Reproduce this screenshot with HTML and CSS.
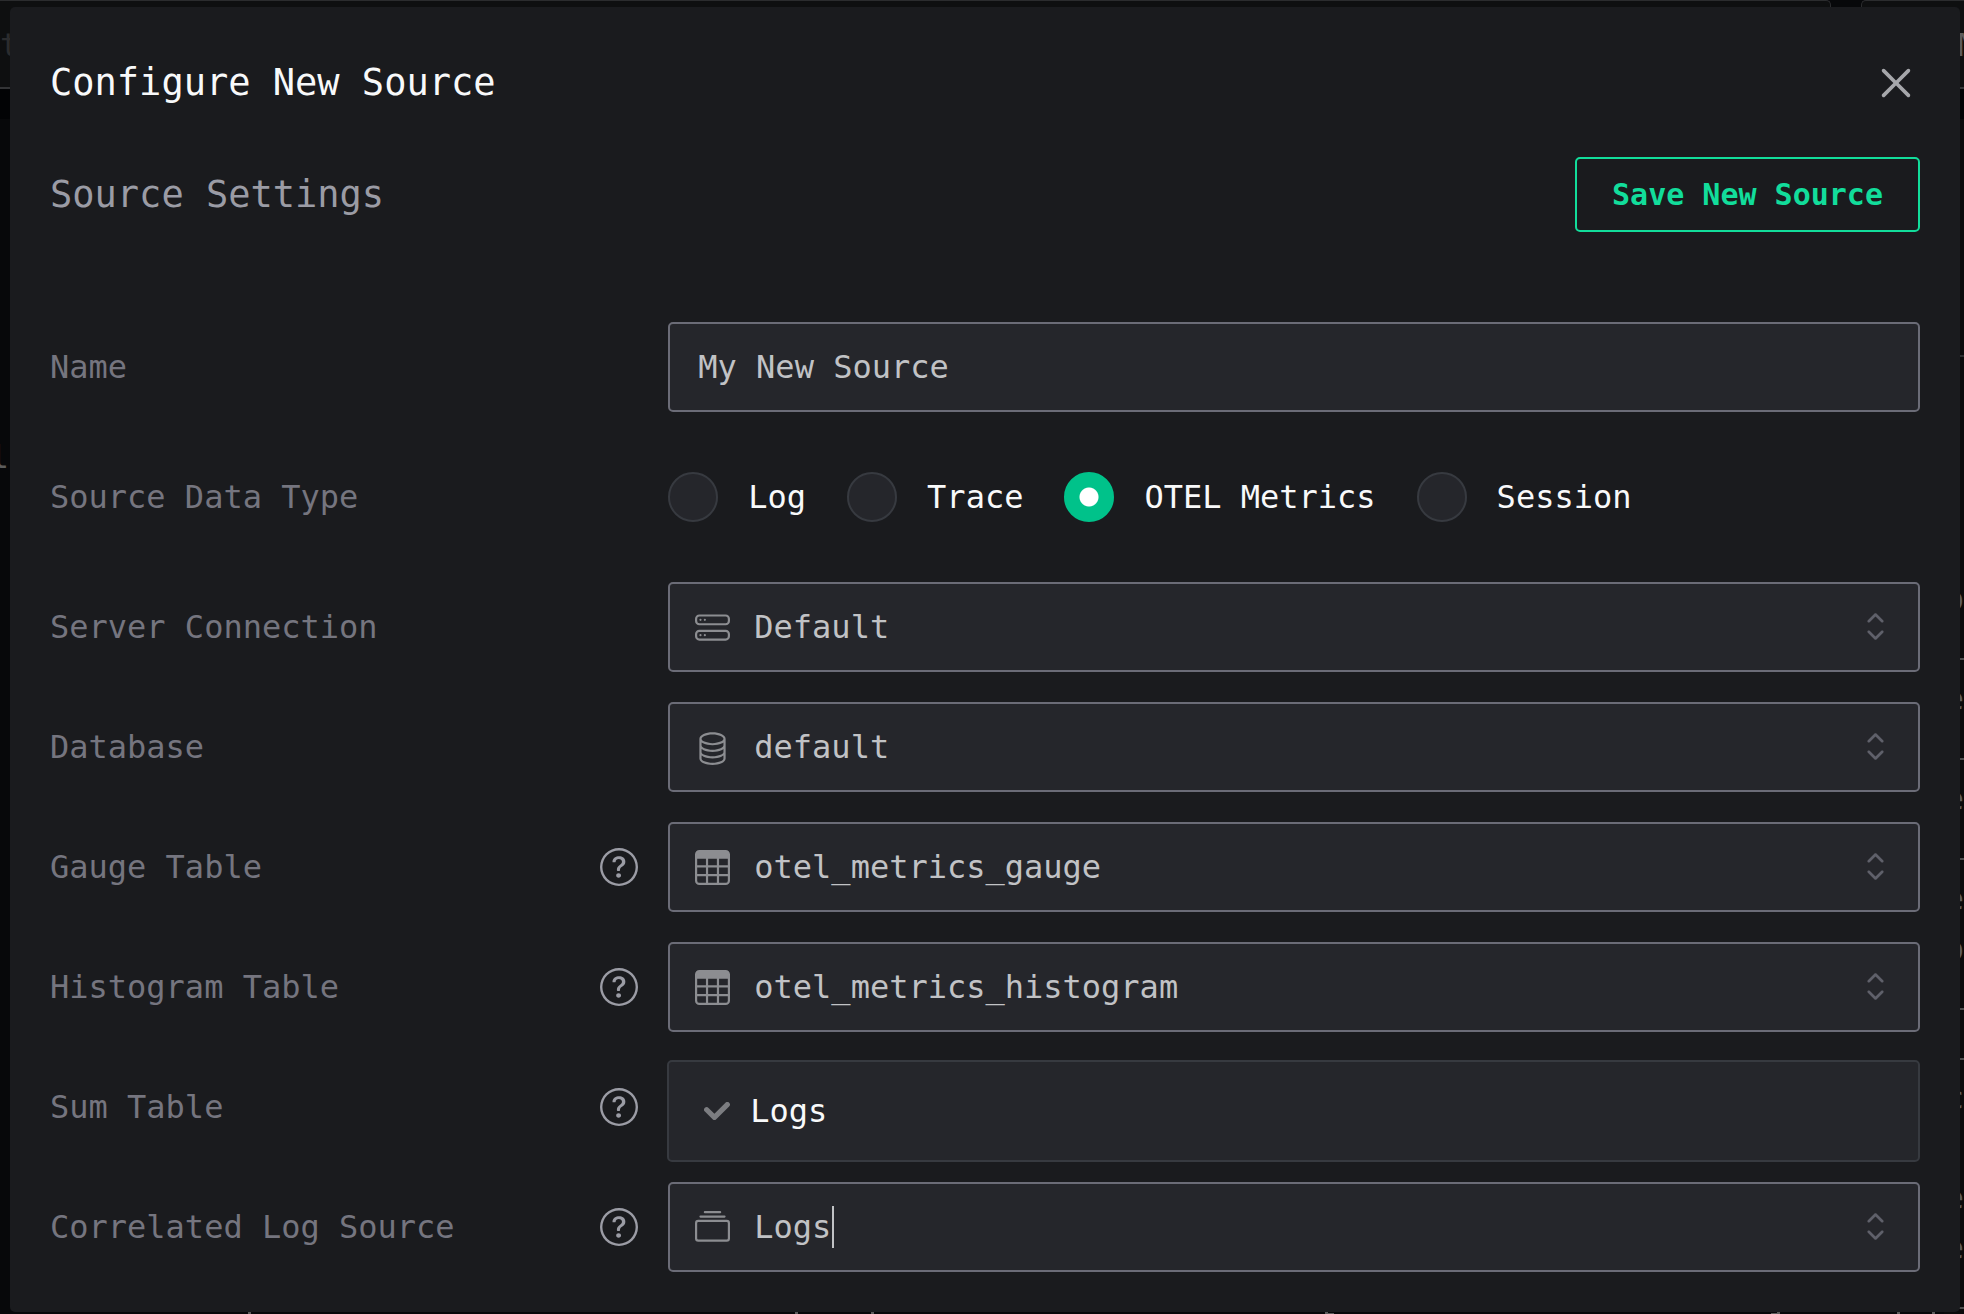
FILE: index.html
```html
<!DOCTYPE html>
<html lang="en">
<head>
<meta charset="utf-8">
<meta name="viewport" content="width=device-width, initial-scale=1">
<title>Configure New Source</title>
<link rel="stylesheet" href="styles.css">
</head>
<body>
<svg class="sprite" aria-hidden="true">
  <symbol id="i-close" viewBox="0 0 15 15"><path d="M11.7816 4.03157C12.0062 3.80702 12.0062 3.44295 11.7816 3.2184C11.5571 2.99385 11.193 2.99385 10.9685 3.2184L7.50005 6.68682L4.03164 3.2184C3.80708 2.99385 3.44301 2.99385 3.21846 3.2184C2.99391 3.44295 2.99391 3.80702 3.21846 4.03157L6.68688 7.49999L3.21846 10.9684C2.99391 11.193 2.99391 11.557 3.21846 11.7816C3.44301 12.0061 3.80708 12.0061 4.03164 11.7816L7.50005 8.31316L10.9685 11.7816C11.193 12.0061 11.5571 12.0061 11.7816 11.7816C12.0062 11.557 12.0062 11.193 11.7816 10.9684L8.31322 7.49999L11.7816 4.03157Z"/></symbol>
  <symbol id="i-updown" viewBox="0 0 15 15"><path d="M4.93179 5.43179C4.75605 5.60753 4.75605 5.89245 4.93179 6.06819C5.10753 6.24392 5.39245 6.24392 5.56819 6.06819L7.49999 4.13638L9.43179 6.06819C9.60753 6.24392 9.89245 6.24392 10.0682 6.06819C10.2439 5.89245 10.2439 5.60753 10.0682 5.43179L7.81819 3.18179C7.73379 3.0974 7.61933 3.04999 7.49999 3.04999C7.38064 3.04999 7.26618 3.0974 7.18179 3.18179L4.93179 5.43179ZM10.0682 9.56819C10.2439 9.39245 10.2439 9.10753 10.0682 8.93179C9.89245 8.75606 9.60753 8.75606 9.43179 8.93179L7.49999 10.8636L5.56819 8.93179C5.39245 8.75606 5.10753 8.75606 4.93179 8.93179C4.75605 9.10753 4.75605 9.39245 4.93179 9.56819L7.18179 11.8182C7.35753 11.9939 7.64245 11.9939 7.81819 11.8182L10.0682 9.56819Z"/></symbol>
  <symbol id="i-check" viewBox="0 0 10 7"><path d="M4 4.586L1.707 2.293A1 1 0 1 0 .293 3.707l3 3a.997.997 0 0 0 1.414 0l5-5A1 1 0 1 0 8.293.293L4 4.586z"/></symbol>
  <symbol id="i-help" viewBox="0 0 16 16"><path d="M8 15A7 7 0 1 1 8 1a7 7 0 0 1 0 14m0 1A8 8 0 1 0 8 0a8 8 0 0 0 0 16"/><path d="M5.255 5.786a.237.237 0 0 0 .241.247h.825c.138 0 .248-.113.266-.25.09-.656.54-1.134 1.342-1.134.686 0 1.314.343 1.314 1.168 0 .635-.374.927-.965 1.371-.673.489-1.206 1.06-1.168 1.987l.003.217a.25.25 0 0 0 .25.246h.811a.25.25 0 0 0 .25-.25v-.105c0-.718.273-.927 1.01-1.486.609-.463 1.244-.977 1.244-2.056 0-1.511-1.276-2.241-2.673-2.241-1.267 0-2.655.59-2.75 2.286m1.557 5.763c0 .533.425.927 1.01.927.609 0 1.028-.394 1.028-.927 0-.552-.42-.94-1.029-.94-.584 0-1.009.388-1.009.94"/></symbol>
  <symbol id="i-server" viewBox="0 0 16 16"><path d="M14 10a1 1 0 0 1 1 1v1a1 1 0 0 1-1 1H2a1 1 0 0 1-1-1v-1a1 1 0 0 1 1-1zM2 9a2 2 0 0 0-2 2v1a2 2 0 0 0 2 2h12a2 2 0 0 0 2-2v-1a2 2 0 0 0-2-2z"/><path d="M5 11.5a.5.5 0 1 1-1 0 .5.5 0 0 1 1 0m-2 0a.5.5 0 1 1-1 0 .5.5 0 0 1 1 0M14 3a1 1 0 0 1 1 1v1a1 1 0 0 1-1 1H2a1 1 0 0 1-1-1V4a1 1 0 0 1 1-1zM2 2a2 2 0 0 0-2 2v1a2 2 0 0 0 2 2h12a2 2 0 0 0 2-2V4a2 2 0 0 0-2-2z"/><path d="M5 4.5a.5.5 0 1 1-1 0 .5.5 0 0 1 1 0m-2 0a.5.5 0 1 1-1 0 .5.5 0 0 1 1 0"/></symbol>
  <symbol id="i-database" viewBox="0 0 16 16"><path d="M4.318 2.687C5.234 2.271 6.536 2 8 2s2.766.27 3.682.687C12.644 3.125 13 3.627 13 4c0 .374-.356.875-1.318 1.313C10.766 5.729 9.464 6 8 6s-2.766-.27-3.682-.687C3.356 4.875 3 4.373 3 4c0-.374.356-.875 1.318-1.313M13 5.698V7c0 .374-.356.875-1.318 1.313C10.766 8.729 9.464 9 8 9s-2.766-.27-3.682-.687C3.356 7.875 3 7.373 3 7V5.698c.271.202.58.378.904.525C4.978 6.711 6.427 7 8 7s3.022-.289 4.096-.777A5 5 0 0 0 13 5.698M14 4c0-1.007-.875-1.755-1.904-2.223C11.022 1.289 9.573 1 8 1s-3.022.289-4.096.777C2.875 2.245 2 2.993 2 4v9c0 1.007.875 1.755 1.904 2.223C4.978 15.71 6.427 16 8 16s3.022-.289 4.096-.777C13.125 14.755 14 14.007 14 13zm-1 4.698V10c0 .374-.356.875-1.318 1.313C10.766 11.729 9.464 12 8 12s-2.766-.27-3.682-.687C3.356 10.875 3 10.373 3 10V8.698c.271.202.58.378.904.525C4.978 9.71 6.427 10 8 10s3.022-.289 4.096-.777A5 5 0 0 0 13 8.698m0 3V13c0 .374-.356.875-1.318 1.313C10.766 14.729 9.464 15 8 15s-2.766-.27-3.682-.687C3.356 13.875 3 13.373 3 13v-1.302c.271.202.58.378.904.525C4.978 12.71 6.427 13 8 13s3.022-.289 4.096-.777c.324-.147.633-.323.904-.525"/></symbol>
  <symbol id="i-table" viewBox="0 0 16 16"><path d="M0 2a2 2 0 0 1 2-2h12a2 2 0 0 1 2 2v12a2 2 0 0 1-2 2H2a2 2 0 0 1-2-2zm15 2h-4v3h4zm0 4h-4v3h4zm0 4h-4v3h3a1 1 0 0 0 1-1zm-5 3v-3H6v3zm-5 0v-3H1v2a1 1 0 0 0 1 1zm-4-4h4V8H1zm0-4h4V4H1zm5-3v3h4V4zm4 4H6v3h4z"/></symbol>
  <symbol id="i-collection" viewBox="0 0 16 16"><path d="M2.5 3.5a.5.5 0 0 1 0-1h11a.5.5 0 0 1 0 1zm2-2a.5.5 0 0 1 0-1h7a.5.5 0 0 1 0 1zM0 13a1.5 1.5 0 0 0 1.5 1.5h13A1.5 1.5 0 0 0 16 13V6a1.5 1.5 0 0 0-1.5-1.5h-13A1.5 1.5 0 0 0 0 6zm1.5.5A.5.5 0 0 1 1 13V6a.5.5 0 0 1 .5-.5h13a.5.5 0 0 1 .5.5v7a.5.5 0 0 1-.5.5z"/></symbol>
</svg>

<div class="page">
  <div class="backdrop" aria-hidden="true">
    <div class="panels">
      <div class="panel panel-main">t</div>
      <div class="panel panel-side">M</div>
    </div>
    <div class="gutter"></div>
    <div class="rest">
      <div class="edge">l</div>
      <div class="rail">
        <div class="cell cell-first"></div>
        <div class="cell cell-large">p</div>
        <div class="cell">e</div>
        <div class="cell">e</div>
        <div class="cell cell-medium">e<br>p</div>
        <div class="cell cell-small"></div>
        <div class="cell cell-last">c<br><br>e<br>e</div>
      </div>
    </div>
    <svg class="ticks" viewBox="0 0 1964 2" preserveAspectRatio="none"><path d="M248 0h3v2h-3zM795 0h3v2h-3zM871 0h3v2h-3zM1325 0h3v1h6v1h-9zM1771 1h6v-1h3v2h-9zM1897 0h3v2h-3zM1932 0h3v2h-3z"/></svg>
  </div>

  <div class="modal" role="dialog" aria-modal="true" aria-labelledby="dialog-title">
    <header class="modal-head">
      <h1 class="title" id="dialog-title">Configure New Source</h1>
      <button class="close" type="button" aria-label="Close"><svg class="icon-close"><use href="#i-close"/></svg></button>
    </header>
    <form class="form">
      <div class="section-head">
        <h2 class="subtitle">Source Settings</h2>
        <button class="save" type="button">Save New Source</button>
      </div>

      <div class="rows">
        <div class="row">
          <div class="label-cell"><label for="name">Name</label></div>
          <div class="field"><input class="control" id="name" type="text" value="My New Source"></div>
        </div>

        <div class="row row-tall" role="radiogroup" aria-labelledby="type-label">
          <div class="label-cell"><span id="type-label">Source Data Type</span></div>
          <div class="radios">
            <label class="radio"><input type="radio" name="kind"><span>Log</span></label>
            <label class="radio"><input type="radio" name="kind"><span>Trace</span></label>
            <label class="radio"><input type="radio" name="kind" checked><span>OTEL Metrics</span></label>
            <label class="radio"><input type="radio" name="kind"><span>Session</span></label>
          </div>
        </div>

        <div class="row">
          <div class="label-cell"><label for="connection">Server Connection</label></div>
          <div class="field">
            <select class="control with-icon" id="connection"><option>Default</option></select>
            <svg class="icon-left"><use href="#i-server"/></svg><svg class="icon-right"><use href="#i-updown"/></svg>
          </div>
        </div>

        <div class="row">
          <div class="label-cell"><label for="database">Database</label></div>
          <div class="field">
            <select class="control with-icon" id="database"><option>default</option></select>
            <svg class="icon-left"><use href="#i-database"/></svg><svg class="icon-right"><use href="#i-updown"/></svg>
          </div>
        </div>

        <div class="row">
          <div class="label-cell"><label for="gauge">Gauge Table</label><svg class="icon-help"><use href="#i-help"/></svg></div>
          <div class="field">
            <select class="control with-icon" id="gauge"><option>otel_metrics_gauge</option></select>
            <svg class="icon-left"><use href="#i-table"/></svg><svg class="icon-right"><use href="#i-updown"/></svg>
          </div>
        </div>

        <div class="row">
          <div class="label-cell"><label for="histogram">Histogram Table</label><svg class="icon-help"><use href="#i-help"/></svg></div>
          <div class="field">
            <select class="control with-icon" id="histogram"><option>otel_metrics_histogram</option></select>
            <svg class="icon-left"><use href="#i-table"/></svg><svg class="icon-right"><use href="#i-updown"/></svg>
          </div>
        </div>

        <div class="row">
          <div class="label-cell"><label for="sum">Sum Table</label><svg class="icon-help"><use href="#i-help"/></svg></div>
          <div class="field"><select class="control with-icon" id="sum"></select></div>
        </div>

        <div class="row">
          <div class="label-cell"><label for="log-source">Correlated Log Source</label><svg class="icon-help"><use href="#i-help"/></svg></div>
          <div class="field">
            <input class="control with-icon" id="log-source" type="text" role="combobox" aria-expanded="true" aria-controls="log-options" value="Logs">
            <svg class="icon-left"><use href="#i-collection"/></svg><svg class="icon-right"><use href="#i-updown"/></svg>
            <span class="caret"></span>
            <div class="menu" id="log-options" role="listbox">
              <div class="option" role="option" aria-selected="true"><svg class="icon-check"><use href="#i-check"/></svg><span>Logs</span></div>
            </div>
          </div>
        </div>
      </div>
    </form>
  </div>
</div>
</body>
</html>
```
FILE: styles.css
```css
* { box-sizing: border-box; }

body {
  margin: 0;
  background: #07080a;
  color: #f8f9fa;
  font-family: "DejaVu Sans Mono", monospace;
  font-size: 32px;
  line-height: 44px;
}

svg { display: block; fill: currentColor; flex: none; }
.sprite { position: absolute; width: 0; height: 0; }

.page {
  position: relative;
  min-height: 100vh;
  padding: 7px 4px 2px 10px;
  overflow: hidden;
}

/* Dimmed page behind the dialog */
.backdrop {
  position: absolute;
  inset: 0;
  display: flex;
  flex-direction: column;
  overflow: hidden;
  color: #5c5c5c;
}
.panels { display: flex; gap: 30px; }
.panel {
  height: 89px;
  padding-top: 22px;
  overflow: hidden;
  background: #0e0f10;
  border: 1px solid #2b2c2e;
  border-bottom: 2px solid #333436;
}
.panel-main { flex: 1; border-left: 0; border-radius: 0 5px 0 0; color: #2b2c2e; }
.panel-side { width: 103px; padding-left: 96px; border-right: 0; border-radius: 5px 0 0 0; }
.gutter { height: 30px; background: #020305; }
.rest { flex: 1; display: flex; justify-content: space-between; min-height: 0; }
.edge {
  display: flex;
  justify-content: flex-end;
  width: 9px;
  padding-top: 316px;
}
.rail { width: 20px; background: #0a0a0b; line-height: 50px; text-align: right; }
.cell {
  display: flex;
  flex-direction: column;
  justify-content: flex-end;
  height: 100px;
  padding-bottom: 34px;
  border-bottom: 2px solid #4c4c4c;
}
.cell-first { height: 238px; border-color: #2b2c2e; }
.cell-large { height: 303px; }
.cell-medium { height: 150px; }
.cell-small { height: 50px; }
.cell-last { height: 249px; }
.ticks { position: absolute; bottom: 0; width: 100%; height: 2px; }

.modal {
  position: relative;
  padding: 40px;
  background: #1a1b1e;
  border-radius: 5px;
}
.modal-head, .section-head {
  display: flex;
  align-items: center;
  justify-content: space-between;
}
.modal-head { height: 72px; margin-bottom: 38px; }
.section-head { height: 75px; margin-bottom: 90px; }

.title, .subtitle {
  margin: 0;
  font-size: 37px;
  font-weight: 400;
}
.subtitle { color: #9b9ca5; }

button { font-family: inherit; cursor: pointer; background: none; }
.close { border: 0; padding: 0; color: #a6a7ab; }
.icon-close { width: 48px; height: 48px; }
.save {
  height: 75px;
  padding: 0 35px;
  border: 2px solid #12dd9b;
  border-radius: 5px;
  color: #12dd9b;
  font-size: 30px;
  font-weight: 700;
}

.rows { display: grid; gap: 30px; }
.row {
  display: grid;
  grid-template-columns: minmax(0, 47fr) minmax(0, 100fr);
  gap: 30px;
  align-items: center;
}
.row-tall { min-height: 110px; }
.label-cell {
  display: flex;
  align-items: center;
  justify-content: space-between;
  color: #75757f;
}
.icon-help { width: 38px; height: 38px; color: #9b9ca5; }

.field { position: relative; }
.control {
  display: block;
  width: 100%;
  height: 90px;
  padding: 0 28px;
  border: 2px solid #6b6c77;
  border-radius: 5px;
  outline: 0;
  background: #25262b;
  color: #c1c2c5;
  font: inherit;
  appearance: none;
}
.with-icon { padding: 0 84px; }
.icon-left {
  position: absolute;
  top: 28px;
  left: 27px;
  width: 35px;
  height: 35px;
  color: #8c8d91;
}
.icon-right {
  position: absolute;
  top: 22px;
  right: 22px;
  width: 45px;
  height: 45px;
  color: #5f606a;
}
.caret {
  position: absolute;
  top: 24px;
  left: 164px;
  width: 2px;
  height: 42px;
  background: #c1c2c5;
}

.menu {
  position: absolute;
  right: 0;
  bottom: 110px;
  left: -1px;
  padding: 10px;
  background: #25262b;
  border: 2px solid #373a40;
  border-radius: 5px;
}
.option {
  display: flex;
  align-items: center;
  gap: 20px;
  height: 78px;
  padding: 0 25px;
}
.icon-check { width: 26px; height: 18px; color: #7c7d81; }

.radios { display: flex; gap: 41px; }
.radio { display: flex; align-items: center; gap: 30px; }
.radio input {
  width: 50px;
  height: 50px;
  margin: 0;
  border: 2px solid #373a40;
  border-radius: 50%;
  background: #25262b;
  appearance: none;
}
.radio input:checked {
  border-color: #00c28a;
  background: radial-gradient(circle, #fff 9px, #00c28a 10px);
}
```
